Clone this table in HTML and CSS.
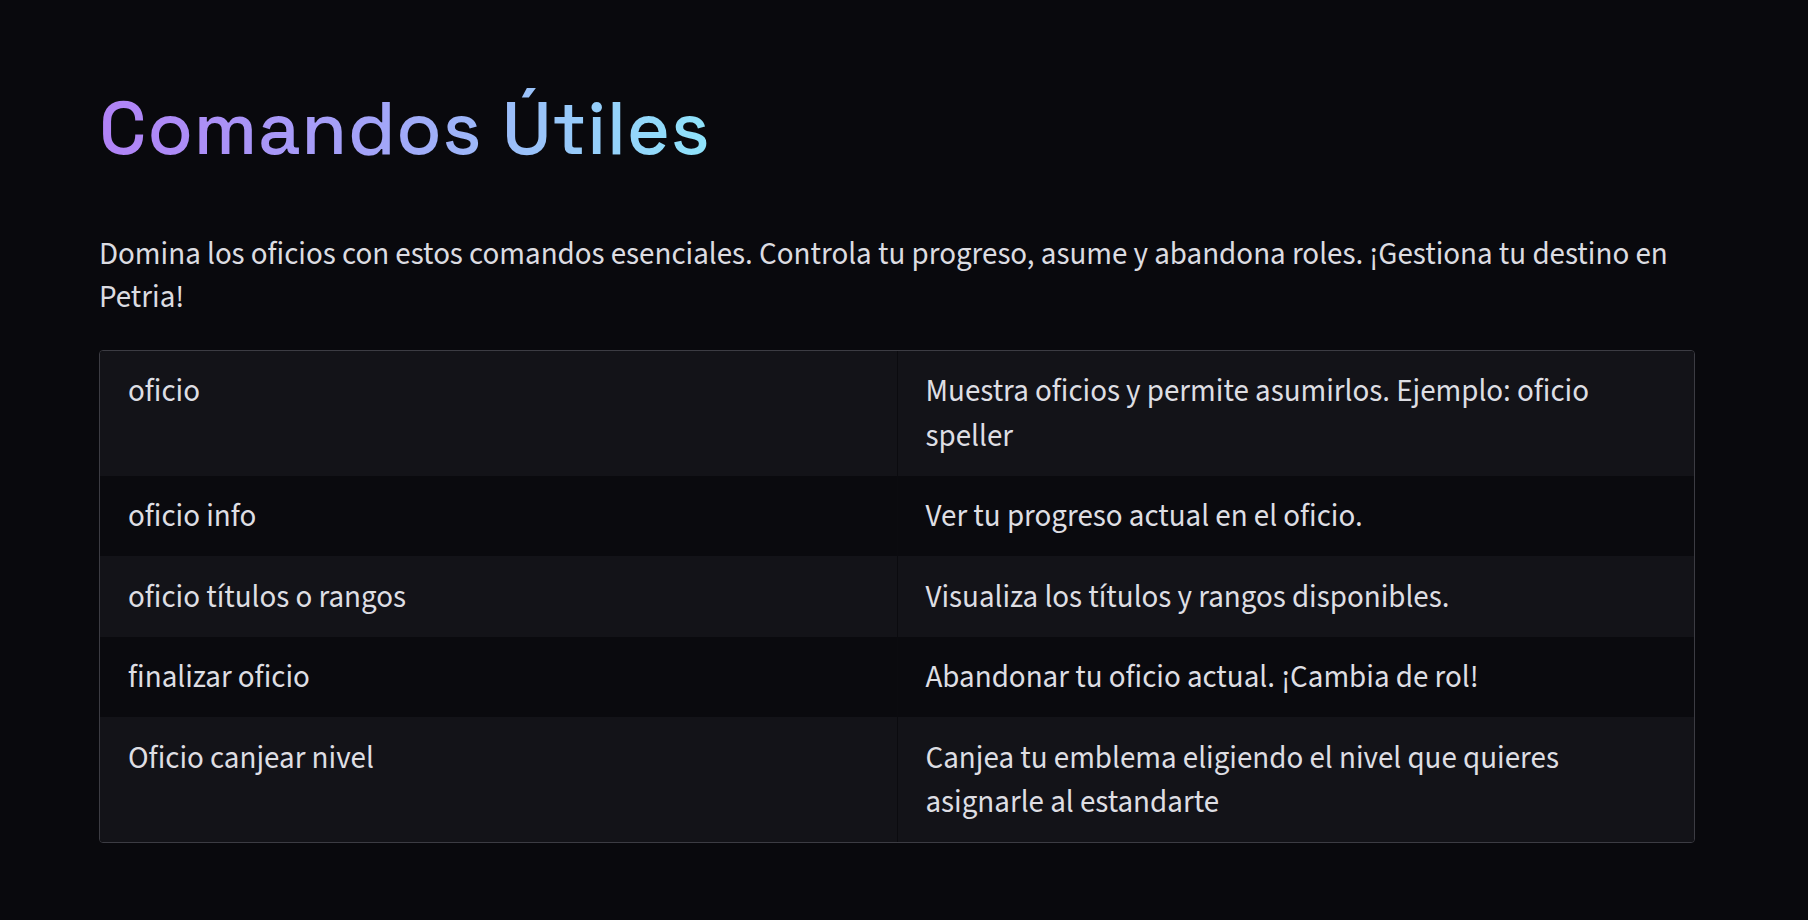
FILE: index.html
```html
<!DOCTYPE html>
<html lang="es">
<head>
<meta charset="utf-8">
<title>Comandos Útiles</title>
<link rel="stylesheet" href="styles.css">
</head>
<body>
<main class="page">
  <h1 class="title"><span class="title-text">Comandos Útiles</span></h1>
  <p class="intro">Domina los oficios con estos comandos esenciales. Controla tu progreso, asume y abandona roles. ¡Gestiona tu destino en Petria!</p>
  <div class="table-wrap">
    <table class="cmd-table">
      <tbody>
        <tr class="row-odd">
          <td class="cell cell-cmd">oficio</td>
          <td class="cell cell-desc">Muestra oficios y permite asumirlos. Ejemplo: oficio speller</td>
        </tr>
        <tr class="row-even">
          <td class="cell cell-cmd">oficio info</td>
          <td class="cell cell-desc">Ver tu progreso actual en el oficio.</td>
        </tr>
        <tr class="row-odd">
          <td class="cell cell-cmd">oficio títulos o rangos</td>
          <td class="cell cell-desc">Visualiza los títulos y rangos disponibles.</td>
        </tr>
        <tr class="row-even">
          <td class="cell cell-cmd">finalizar oficio</td>
          <td class="cell cell-desc">Abandonar tu oficio actual. ¡Cambia de rol!</td>
        </tr>
        <tr class="row-odd">
          <td class="cell cell-cmd">Oficio canjear nivel</td>
          <td class="cell cell-desc">Canjea tu emblema eligiendo el nivel que quieres asignarle al estandarte</td>
        </tr>
      </tbody>
    </table>
  </div>
</main>
</body>
</html>
```
FILE: styles.css
```css
html, body {
  margin: 0;
  padding: 0;
  background: #09090d;
}

body {
  min-height: 920px;
  color: #dedee3;
  font-family: "Source Sans 3", "Source Sans Pro", "Lato", sans-serif;
}

.page {
  padding: 84px 113px 40px 99px;
}

.title {
  margin: 0;
  font-family: "Space Grotesk", "Inter", sans-serif;
  font-weight: 500;
  font-size: 74px;
  line-height: 89px;
  letter-spacing: 0.85px;
}

.title-text {
  display: inline-block;
  background: linear-gradient(90deg, #b182f6 0%, #a3a4f8 45%, #8fe4fb 100%);
  -webkit-background-clip: text;
  background-clip: text;
  color: transparent;
}

.intro {
  margin: 60px 0 0 0;
  font-size: 31px;
  line-height: 1.4;
  color: #dcdce1;
}

.table-wrap {
  margin-top: 30px;
  border: 1px solid #3c3c43;
  border-radius: 4px;
  overflow: hidden;
}

.cmd-table {
  width: 100%;
  table-layout: fixed;
  border-collapse: collapse;
  border-spacing: 0;
}

.cell {
  padding: 18.5px 28px 17.5px 28px;
  font-size: 31px;
  line-height: 44.5px;
  vertical-align: top;
  color: #dedee3;
}

.cell-desc {
  border-left: 1px solid #0b0b0f;
  padding-left: 28px;
}

.row-odd {
  background: #131318;
}

.row-even {
  background: #0a0a0e;
}
```
